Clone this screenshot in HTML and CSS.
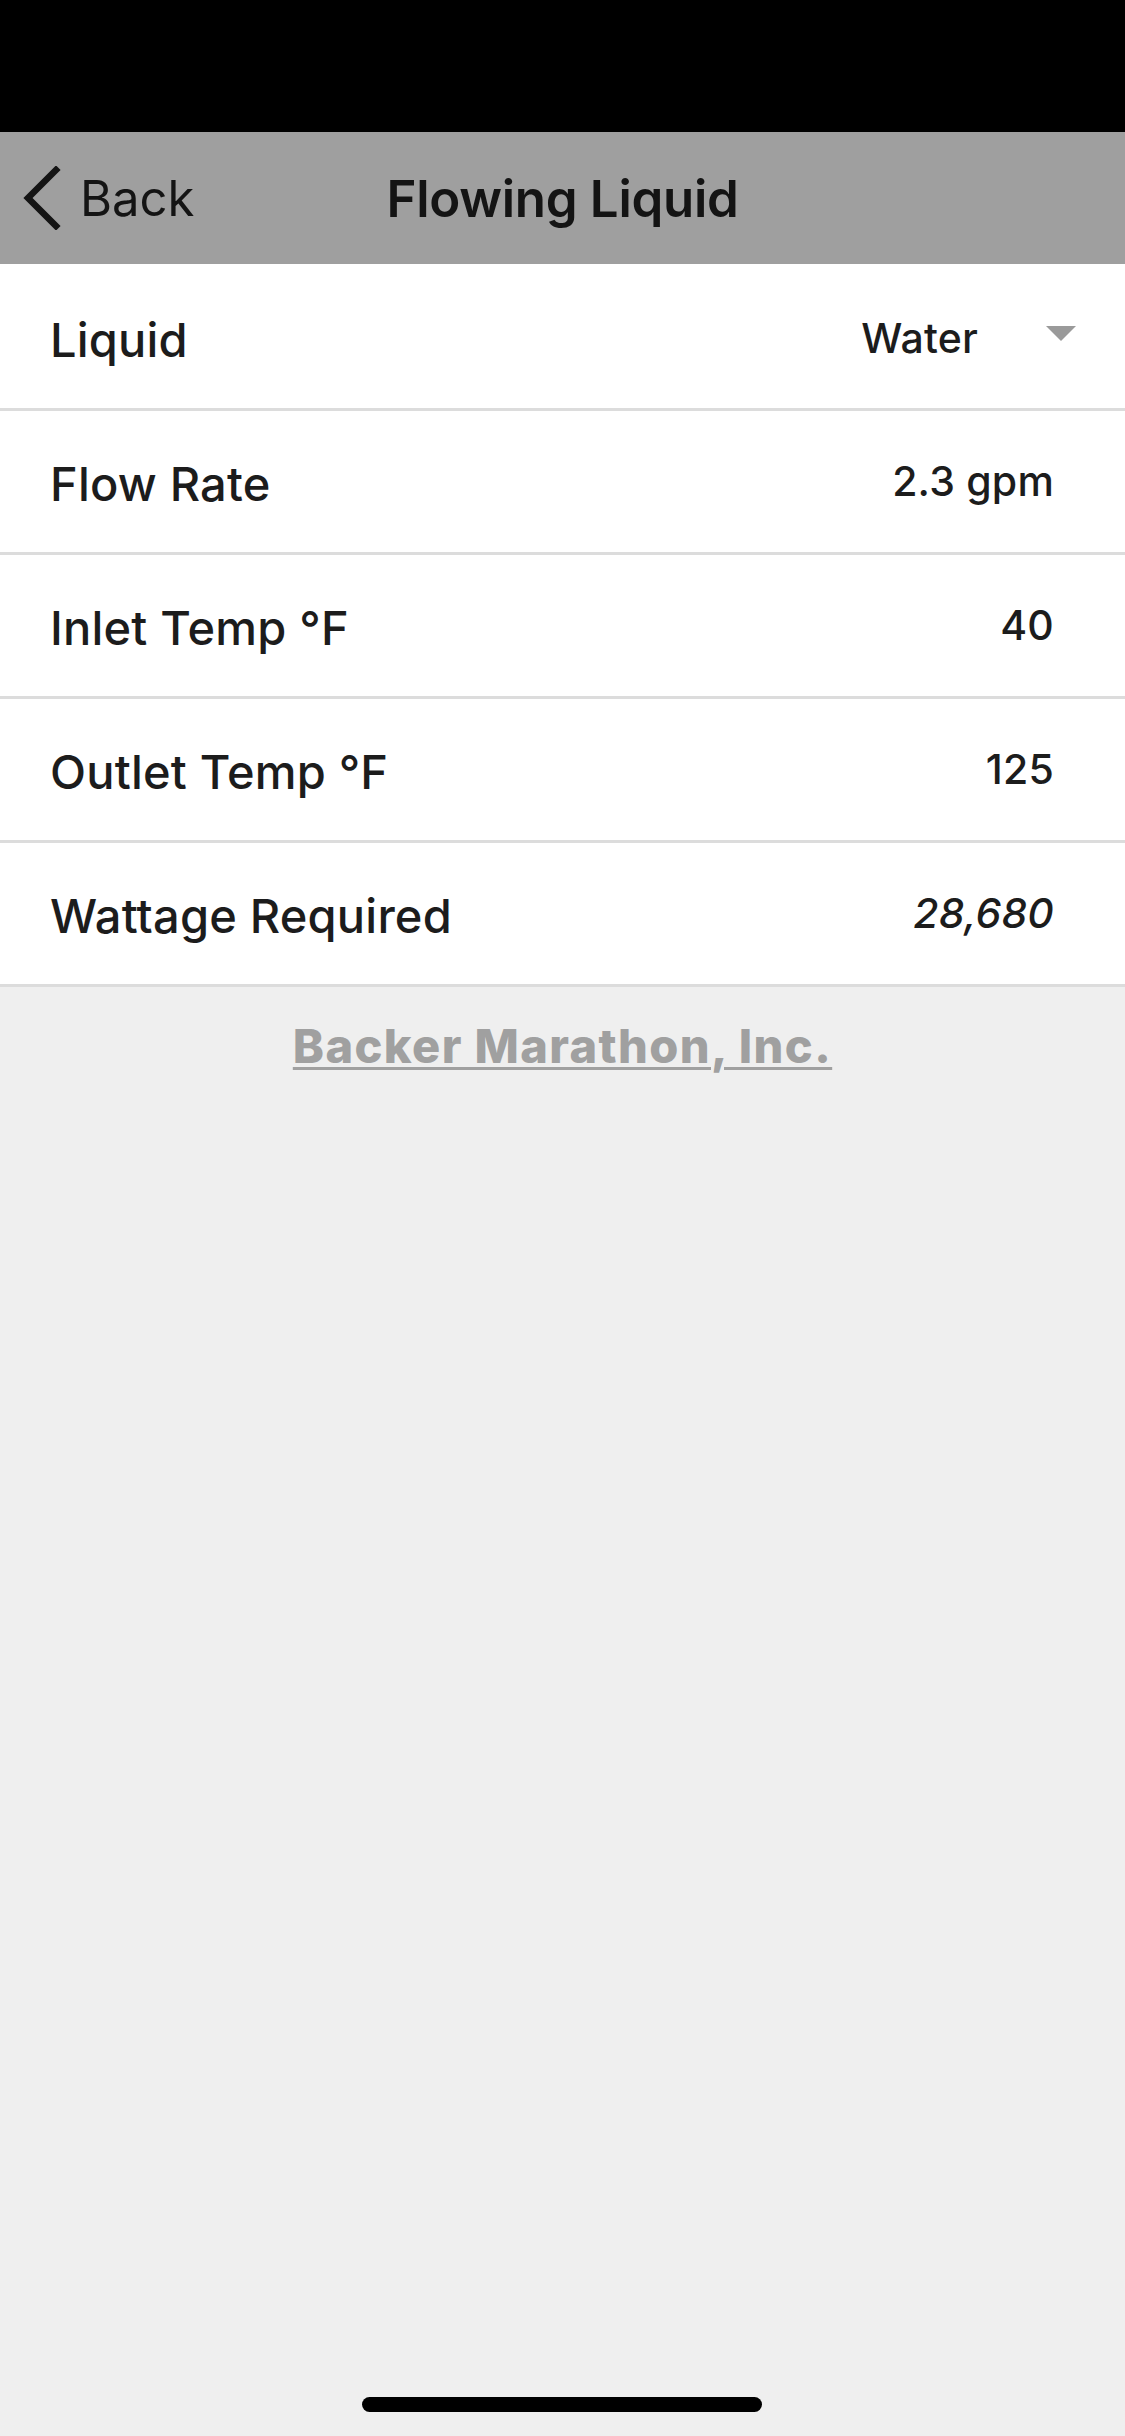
FILE: index.html
```html
<!DOCTYPE html>
<html lang="en">
<head>
    <meta charset="UTF-8">
    <meta name="viewport" content="width=device-width, initial-scale=1.0">
    <title>Flowing Liquid</title>
    <link rel="stylesheet" href="styles.css">
</head>
<body>
    <div class="status-bar"></div>

    <header class="nav-bar">
        <a class="back" href="#">
            <svg class="chevron" width="40" height="64" viewBox="0 0 40 64" aria-hidden="true">
                <polyline points="34,4 6,32 34,60" fill="none" stroke="#141414" stroke-width="6.5" stroke-linecap="square" />
            </svg>
            <span>Back</span>
        </a>
        <h1 class="title">Flowing Liquid</h1>
    </header>

    <main class="form">
        <div class="row">
            <span class="label">Liquid</span>
            <span class="select">
                <span class="value">Water</span>
                <span class="caret"></span>
            </span>
        </div>
        <div class="row">
            <span class="label">Flow Rate</span>
            <span class="value">2.3 gpm</span>
        </div>
        <div class="row">
            <span class="label">Inlet Temp °F</span>
            <span class="value">40</span>
        </div>
        <div class="row">
            <span class="label">Outlet Temp °F</span>
            <span class="value">125</span>
        </div>
        <div class="row">
            <span class="label">Wattage Required</span>
            <span class="value result">28,680</span>
        </div>
    </main>

    <footer class="footer">
        <a href="#" class="company">Backer Marathon, Inc.</a>
    </footer>

    <div class="home-indicator"></div>
</body>
</html>
```

FILE: styles.css
```css
:root {
    --nav: #9f9f9f;
    --background: #efefef;
    --text: #1c1c1c;
    --divider: #dcdcdc;
    --muted: #a0a0a0;
}

html, body {
    height: 100%;
}

body {
    margin: 0;
    font-family: Inter, "Noto Sans", sans-serif;
    background: var(--background);
    color: var(--text);
    display: flex;
    flex-direction: column;
}

.status-bar {
    height: 132px;
    background: #000;
}

.nav-bar {
    height: 132px;
    background: var(--nav);
    display: flex;
    align-items: center;
    justify-content: center;
    position: relative;
}

.back {
    position: absolute;
    left: 22px;
    top: 34px;
    display: flex;
    align-items: center;
    gap: 18px;
    color: #141414;
    text-decoration: none;
    font-size: 49px;
    font-weight: 400;
}

.chevron {
    display: block;
}

.title {
    margin: 0;
    font-size: 51px;
    font-weight: 600;
    color: #141414;
    letter-spacing: -0.3px;
}

.form {
    background: #fff;
    padding-top: 3px;
}

.row {
    height: 141px;
    border-bottom: 3px solid var(--divider);
    display: flex;
    align-items: center;
    justify-content: space-between;
    padding: 0 71px 0 50px;
}

.label {
    font-size: 47px;
    font-weight: 500;
    letter-spacing: 0.2px;
    padding-top: 4px;
}

.value {
    font-size: 41px;
    font-weight: 500;
    letter-spacing: 0.2px;
    padding-bottom: 2px;
}

.result {
    font-style: italic;
}

.select {
    display: flex;
    align-items: center;
    gap: 68px;
    margin-right: -22px;
    padding-top: 2px;
}

.caret {
    width: 0;
    height: 0;
    border-left: 15px solid transparent;
    border-right: 15px solid transparent;
    border-top: 15px solid #9a9a9a;
    margin-bottom: 10px;
}

.footer {
    flex: 1;
    text-align: center;
    padding-top: 30px;
}

.company {
    font-size: 47px;
    font-weight: 800;
    color: var(--muted);
    text-decoration: underline;
    text-decoration-thickness: 3px;
    text-underline-offset: 4px;
    letter-spacing: 1.4px;
}

.home-indicator {
    position: fixed;
    left: 362px;
    top: 2397px;
    width: 400px;
    height: 15px;
    border-radius: 8px;
    background: #000;
}
```
